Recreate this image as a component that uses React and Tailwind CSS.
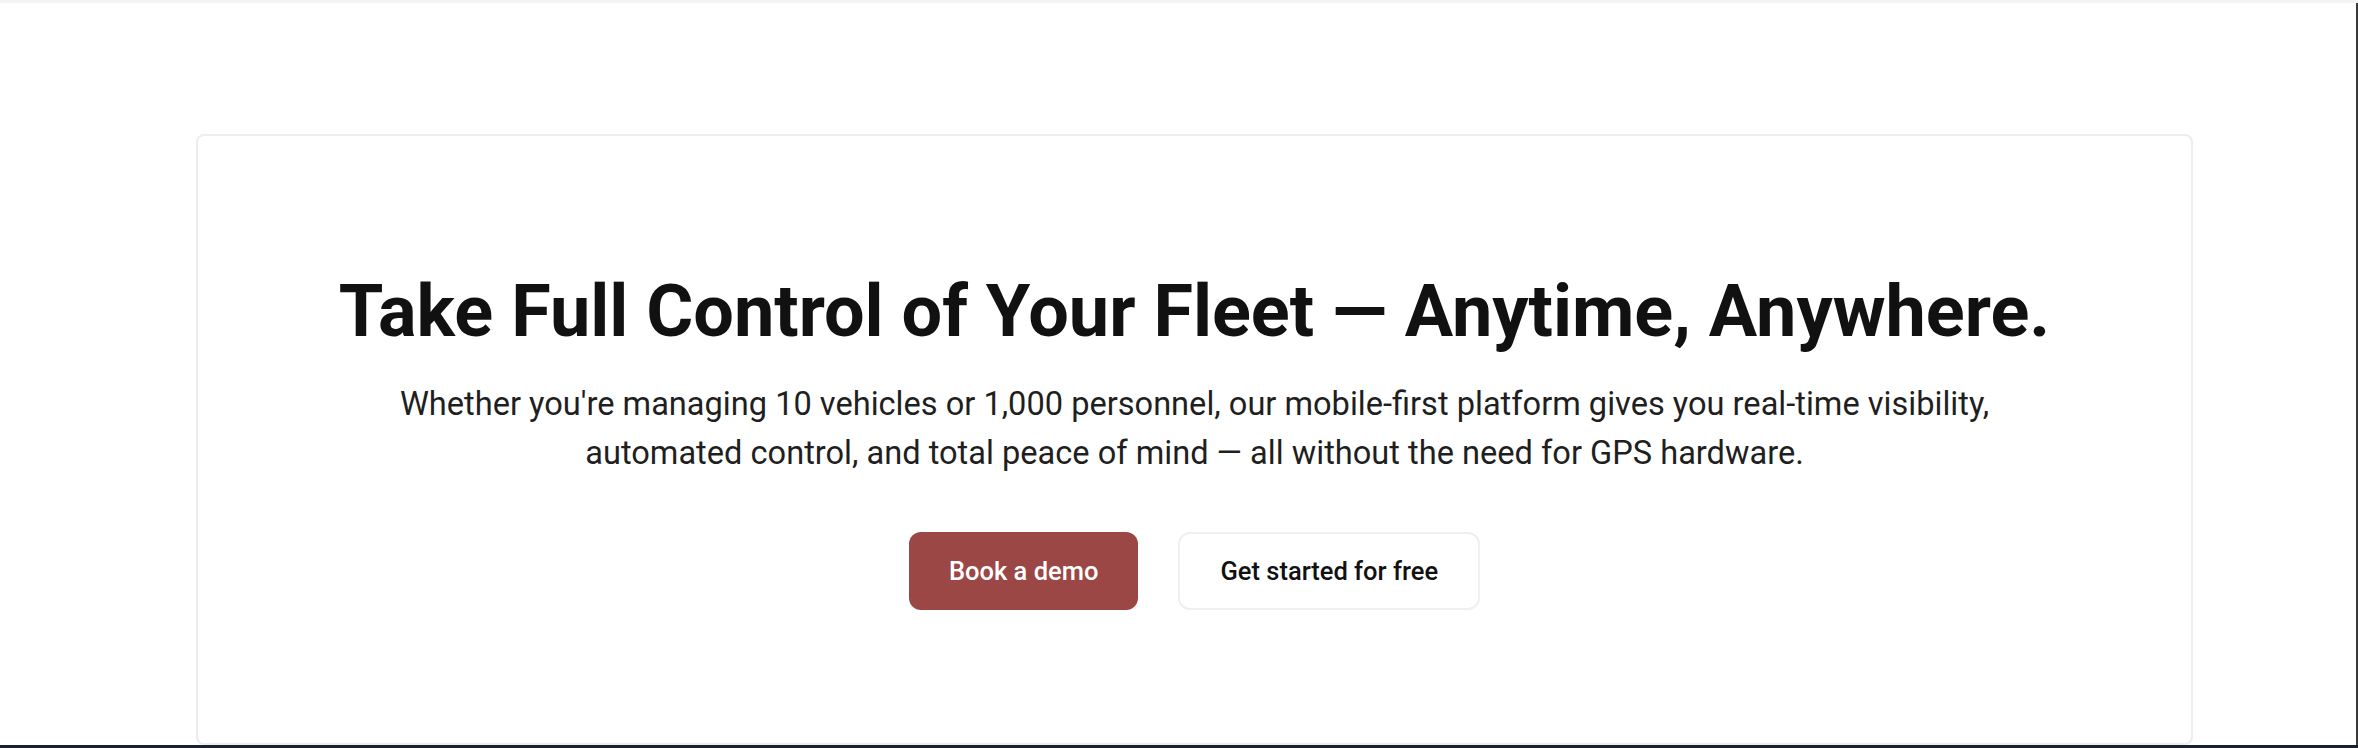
const Hero = () => {
  return (
    <section className="ml-[196px] w-[1997px] h-[611px] rounded-[8px] border-2 border-[#ededed] bg-white flex flex-col items-center pt-[140px]">
      <h1 className="text-[72px] leading-[72px] font-bold text-[#111111] tracking-normal">
        Take Full Control of Your Fleet — Anytime, Anywhere.
      </h1>
      <p className="mt-[32px] max-w-[1660px] text-center text-[32.6px] leading-[49px] text-[#1f1f1f]">
        Whether you're managing 10 vehicles or 1,000 personnel, our mobile-first platform gives you real-time visibility,
        automated control, and total peace of mind — all without the need for GPS hardware.
      </p>
      <div className="mt-[54px] flex items-center gap-10">
        <button className="h-[78px] px-10 rounded-[12px] bg-[#9b4745] text-white text-[25.5px] font-medium">
          Book a demo
        </button>
        <button className="h-[78px] px-10 rounded-[12px] border-2 border-[#efefef] bg-white text-[#111111] text-[25.5px] font-medium">
          Get started for free
        </button>
      </div>
    </section>
  );
};

const App = () => {
  return (
    <div className="w-[2358px] h-[748px] bg-white font-['Roboto',sans-serif] flex flex-col overflow-hidden">
      <div className="h-[3px] bg-[#f3f4f4]" />
      <div className="flex flex-1">
        <main className="flex-1 pt-[131px]">
          <Hero />
        </main>
        <div className="w-[2px] bg-[#3a3a3a]" />
      </div>
      <div className="h-[3px] bg-[#1b2030]" />
    </div>
  );
};

export default App;
